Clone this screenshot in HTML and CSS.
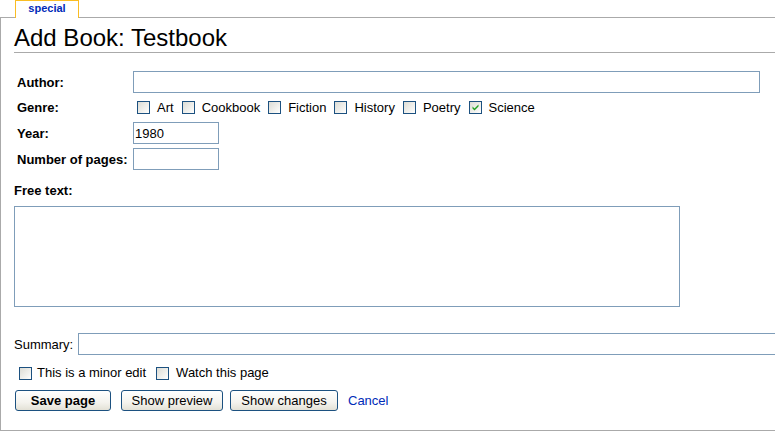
FILE: index.html
```html
<!DOCTYPE html>
<html>
<head>
<meta charset="utf-8">
<title>Add Book: Testbook</title>
<link rel="stylesheet" href="styles.css">
</head>
<body>
<div class="tabs"><span class="tab">special</span></div>
<div class="content">
  <h1 class="title">Add Book: Testbook</h1>
  <div class="fields">
    <div class="lbl">Author:</div>
    <div class="val"><input class="txt author" type="text"></div>
    <div class="lbl">Genre:</div>
    <div class="val genres">
      <label class="opt"><input class="cb" type="checkbox">Art</label>
      <label class="opt"><input class="cb" type="checkbox">Cookbook</label>
      <label class="opt"><input class="cb" type="checkbox">Fiction</label>
      <label class="opt"><input class="cb" type="checkbox">History</label>
      <label class="opt"><input class="cb" type="checkbox">Poetry</label>
      <label class="opt"><input class="cb" type="checkbox" checked>Science</label>
    </div>
    <div class="lbl">Year:</div>
    <div class="val"><input class="txt short" type="text" value="1980"></div>
    <div class="lbl">Number of pages:</div>
    <div class="val"><input class="txt short" type="text"></div>
  </div>
  <div class="free-label">Free text:</div>
  <textarea class="free"></textarea>
  <div class="summary-row">
    <span class="summary-label">Summary:</span>
    <input class="txt summary" type="text">
  </div>
  <div class="edit-opts">
    <label class="opt opt-minor"><input class="cb" type="checkbox">This is a minor edit</label>
    <label class="opt opt-watch"><input class="cb" type="checkbox">Watch this page</label>
  </div>
  <div class="buttons">
    <button class="btn btn-save">Save page</button>
    <button class="btn btn-preview">Show preview</button>
    <button class="btn btn-changes">Show changes</button>
    <a class="cancel" href="#">Cancel</a>
  </div>
</div>
</body>
</html>
```
FILE: styles.css
```css
html, body {
  margin: 0;
  padding: 0;
  background: #fff;
  overflow: hidden;
}
body {
  font-family: "Liberation Sans", Arial, sans-serif;
  font-size: 13px;
  color: #000;
  width: 775px;
  height: 431px;
}
.tabs {
  height: 17px;
  padding-left: 15px;
  position: relative;
  z-index: 2;
}
.tab {
  display: block;
  box-sizing: border-box;
  width: 64px;
  height: 18px;
  border: 1px solid #fabd23;
  border-bottom: none;
  background: #fff;
  color: #002bb8;
  font-weight: bold;
  font-size: 11px;
  line-height: 15px;
  text-align: center;
}
.content {
  box-sizing: border-box;
  width: 775px;
  height: 414px;
  border: 1px solid #aaa;
  border-right: none;
  padding-left: 13px;
  overflow: hidden;
}
.title {
  margin: 5px 0 0 0;
  font-size: 24px;
  font-weight: normal;
  line-height: 29px;
  border-bottom: 1px solid #aaa;
}
.fields {
  display: grid;
  grid-template-columns: 116px auto;
  grid-template-rows: 22px 21px 22px 22px;
  row-gap: 4px;
  margin: 18px 0 0 3px;
}
.lbl {
  font-weight: bold;
  display: flex;
  align-items: center;
}
.val {
  display: flex;
  align-items: center;
}
.txt {
  box-sizing: border-box;
  height: 22px;
  border: 1px solid #7f9db9;
  margin: 0;
  padding: 0 1px;
  font-family: "Liberation Sans", Arial, sans-serif;
  font-size: 13px;
  outline: none;
}
.author { width: 627px; }
.short { width: 86px; }
.genres {
  padding-left: 4px;
  gap: 8px;
}
.opt {
  display: flex;
  align-items: center;
  gap: 7px;
  line-height: 16px;
}
.cb {
  -webkit-appearance: none;
  appearance: none;
  box-sizing: border-box;
  width: 13px;
  height: 13px;
  margin: 0;
  border: 1px solid #1c5180;
  background: linear-gradient(135deg, #dcdcd5 0%, #f4f4f1 70%, #fff 100%);
}
.cb:checked {
  background:
    url("data:image/svg+xml;utf8,<svg xmlns='http://www.w3.org/2000/svg' width='11' height='11' viewBox='0 0 11 11'><path d='M2.5 4.5 L4.5 6.5 L8.5 2.5 L8.5 4.5 L4.5 8.5 L2.5 6.5 Z' fill='%2321a121'/></svg>") no-repeat center,
    linear-gradient(135deg, #dcdcd5 0%, #f4f4f1 70%, #fff 100%);
}
.free-label {
  font-weight: bold;
  line-height: 16px;
  margin-top: 13px;
}
.free {
  display: block;
  box-sizing: border-box;
  width: 666px;
  height: 101px;
  margin: 7px 0 0 0;
  border: 1px solid #7f9db9;
  resize: none;
  outline: none;
}
.summary-row {
  display: flex;
  align-items: center;
  gap: 5px;
  margin-top: 26px;
}
.summary {
  width: 720px;
  flex-shrink: 0;
}
.edit-opts {
  display: flex;
  align-items: center;
  gap: 10px;
  margin: 10px 0 0 5px;
  height: 16px;
}
.opt-minor { gap: 5px; }
.buttons {
  display: flex;
  align-items: center;
  margin: 9px 0 0 1px;
}
.btn {
  box-sizing: border-box;
  height: 21px;
  padding: 0;
  margin: 0;
  border: 1px solid #1c5180;
  border-radius: 3px;
  background: linear-gradient(#ffffff 0%, #f4f3ee 60%, #e3e1d6 100%);
  font-family: "Liberation Sans", Arial, sans-serif;
  font-size: 13px;
  color: #000;
}
.btn-save { width: 96px; font-weight: bold; margin-right: 10px; }
.btn-preview { width: 102px; margin-right: 7px; }
.btn-changes { width: 108px; margin-right: 10px; }
.cancel {
  color: #002bb8;
  text-decoration: none;
}
```
